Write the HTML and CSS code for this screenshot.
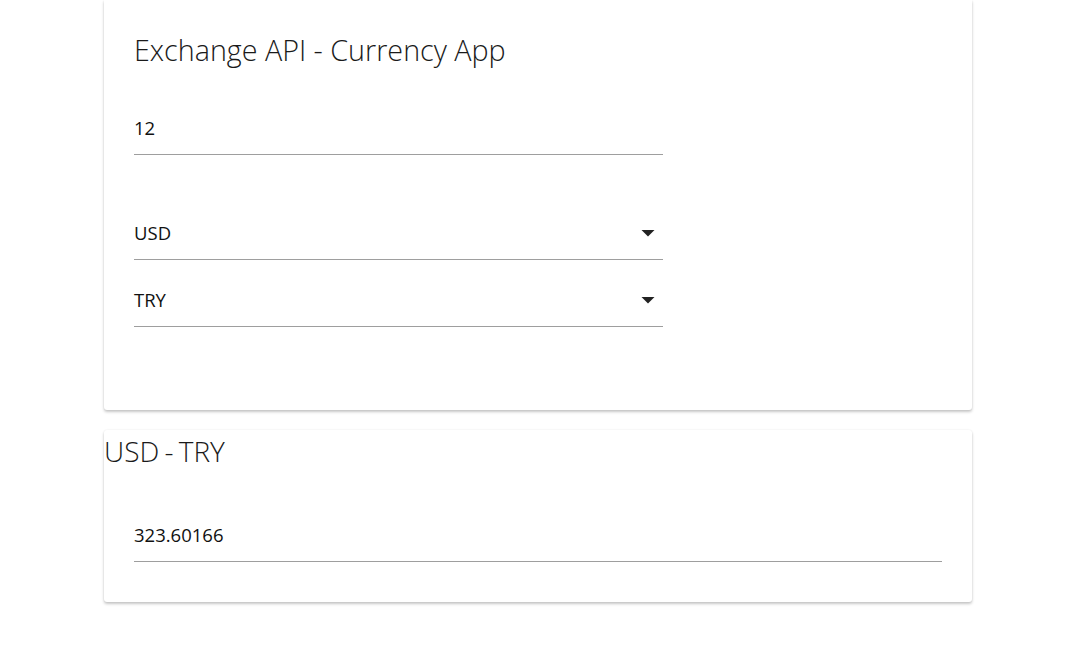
FILE: index.html
```html
<!DOCTYPE html>
<html>
<head>
<meta charset="utf-8">
<link rel="stylesheet" href="styles.css">
</head>
<body>
<main class="page">
  <section class="card card-form">
    <h1 class="title">Exchange API - Currency App</h1>
    <div class="field field-input">
      <span class="value">12</span>
    </div>
    <div class="field field-select first-select">
      <span class="value">USD</span>
      <svg class="arrow" width="14" height="7" viewBox="0 0 14 7"><polygon points="0.5,0 13.5,0 7,6.5" fill="#222"/></svg>
    </div>
    <div class="field field-select">
      <span class="value">TRY</span>
      <svg class="arrow" width="14" height="7" viewBox="0 0 14 7"><polygon points="0.5,0 13.5,0 7,6.5" fill="#222"/></svg>
    </div>
  </section>
  <section class="card card-result">
    <h2 class="result-title">USD - TRY</h2>
    <div class="field field-result">
      <span class="value">323.60166</span>
    </div>
  </section>
</main>
</body>
</html>
```
FILE: styles.css
```css
html, body {
  margin: 0;
  padding: 0;
  background: #ffffff;
}
body {
  font-family: "Open Sans", "Noto Sans", sans-serif;
  color: #111;
}
.page {
  width: 868px;
  margin-left: 104px;
  padding-bottom: 54px;
  display: flex;
  flex-direction: column;
  gap: 20px;
}
.card {
  background: #fff;
  border-radius: 3px;
  box-shadow: 0 2px 3px rgba(0,0,0,0.22), 0 0 2px rgba(0,0,0,0.08);
  box-sizing: border-box;
}
.card-form {
  height: 410px;
  padding: 30px 30px 0 30px;
  border-top-left-radius: 0;
  border-top-right-radius: 0;
}
.title {
  margin: 0;
  font-weight: 300;
  font-size: 28.7px;
  line-height: 40px;
  color: #1a1a1a;
}
.field {
  width: 529px;
  height: 40px;
  padding-bottom: 13px;
  border-bottom: 1px solid #9e9e9e;
  display: flex;
  align-items: center;
  justify-content: space-between;
  box-sizing: border-box;
}
.value {
  font-size: 18.5px;
  line-height: 24px;
  color: #111;
}
.field-input {
  margin-top: 45px;
}
.field-select {
  margin-top: 27px;
}
.first-select {
  margin-top: 65px;
}
.arrow {
  margin-right: 8px;
}
.card-result {
  height: 172px;
  padding: 0 30px 0 0;
}
.result-title {
  margin: 0;
  padding-top: 1px;
  font-weight: 300;
  font-size: 28px;
  line-height: 40px;
  word-spacing: -2px;
  color: #1a1a1a;
}
.field-result {
  width: 808px;
  margin-left: 30px;
  margin-top: 51px;
}
```
